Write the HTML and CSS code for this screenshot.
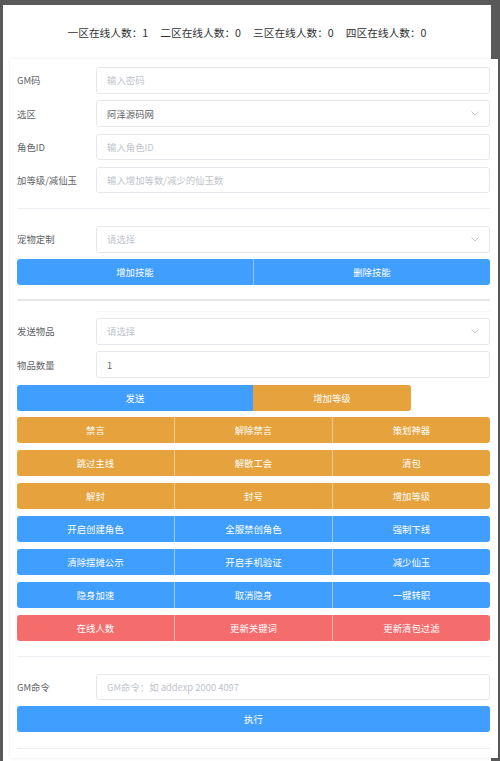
FILE: index.html
```html
<!DOCTYPE html>
<html lang="zh-CN">
<head>
<meta charset="utf-8">
<title>GM</title>
<link rel="stylesheet" href="styles.css">
</head>
<body>
<div class="page">
  <div class="header">
    <span class="stat">一区在线人数：1</span>
    <span class="stat">二区在线人数：0</span>
    <span class="stat">三区在线人数：0</span>
    <span class="stat">四区在线人数：0</span>
  </div>
  <div class="card">
    <div class="row"><label class="lbl">GM码</label><div class="input ph">输入密码</div></div>
    <div class="row"><label class="lbl">选区</label><div class="input select"><span>阿泽源码网</span><svg class="chev" width="8" height="5" viewBox="0 0 8 5"><polyline points="0.5,0.5 4,4 7.5,0.5" fill="none" stroke="#c0c4cc" stroke-width="0.9"/></svg></div></div>
    <div class="row"><label class="lbl">角色ID</label><div class="input ph">输入角色ID</div></div>
    <div class="row"><label class="lbl">加等级/减仙玉</label><div class="input ph">输入增加等数/减少的仙玉数</div></div>

    <div class="divider"></div>

    <div class="row"><label class="lbl">宠物定制</label><div class="input select ph"><span>请选择</span><svg class="chev" width="8" height="5" viewBox="0 0 8 5"><polyline points="0.5,0.5 4,4 7.5,0.5" fill="none" stroke="#c0c4cc" stroke-width="0.9"/></svg></div></div>
    <div class="group">
      <button class="btn blue">增加技能</button>
      <button class="btn blue">删除技能</button>
    </div>

    <div class="divider thick"></div>

    <div class="row first-row"><label class="lbl">发送物品</label><div class="input select ph"><span>请选择</span><svg class="chev" width="8" height="5" viewBox="0 0 8 5"><polyline points="0.5,0.5 4,4 7.5,0.5" fill="none" stroke="#c0c4cc" stroke-width="0.9"/></svg></div></div>
    <div class="row"><label class="lbl">物品数量</label><div class="input">1</div></div>
    <div class="group">
      <button class="btn blue half">发送</button>
      <button class="btn orange third">增加等级</button>
    </div>
    <div class="group">
      <button class="btn orange">禁言</button>
      <button class="btn orange">解除禁言</button>
      <button class="btn orange">策划神器</button>
    </div>
    <div class="group">
      <button class="btn orange">跳过主线</button>
      <button class="btn orange">解散工会</button>
      <button class="btn orange">清包</button>
    </div>
    <div class="group">
      <button class="btn orange">解封</button>
      <button class="btn orange">封号</button>
      <button class="btn orange">增加等级</button>
    </div>
    <div class="group">
      <button class="btn blue">开启创建角色</button>
      <button class="btn blue">全服禁创角色</button>
      <button class="btn blue">强制下线</button>
    </div>
    <div class="group">
      <button class="btn blue">清除摆摊公示</button>
      <button class="btn blue">开启手机验证</button>
      <button class="btn blue">减少仙玉</button>
    </div>
    <div class="group">
      <button class="btn blue">隐身加速</button>
      <button class="btn blue">取消隐身</button>
      <button class="btn blue">一键转职</button>
    </div>
    <div class="group">
      <button class="btn red">在线人数</button>
      <button class="btn red">更新关键词</button>
      <button class="btn red">更新清包过滤</button>
    </div>

    <div class="divider"></div>

    <div class="row gm-row"><label class="lbl">GM命令</label><div class="input ph">GM命令：如 addexp 2000 4097</div></div>
    <div class="group">
      <button class="btn blue">执行</button>
    </div>

    <div class="divider last"></div>
  </div>
</div>
</body>
</html>
```

FILE: styles.css
```css
html, body {
  margin: 0;
  padding: 0;
}
body {
  background: #595959;
  font-family: "Noto Sans CJK SC", "Noto Sans", sans-serif;
}
.page {
  margin: 5px 0 0 3px;
  width: 488px;
  min-height: 756px;
  background: #fff;
}
.header {
  height: 54px;
  display: flex;
  justify-content: center;
  align-items: center;
  gap: 12px;
  font-size: 10.7px;
  color: #303133;
  padding-top: 1px;
  box-sizing: border-box;
}
.card {
  display: flex;
  flex-direction: column;
  margin-left: 7px;
  width: 488px;
  box-sizing: border-box;
  padding: 8px 8px 9px 7px;
  background: #fff;
  box-shadow: 0 0 3px rgba(0, 0, 0, 0.10);
}
.row {
  display: flex;
  align-items: center;
  height: 26.67px;
  margin-bottom: 6.6px;
  flex: none;
}
.lbl {
  width: 79px;
  flex: none;
  font-size: 9.4px;
  color: #606266;
}
.input {
  flex: 1;
  height: 100%;
  box-sizing: border-box;
  border: 1px solid #e6e8ed;
  border-radius: 3px;
  padding: 0 8px 0 10px;
  display: flex;
  align-items: center;
  font-size: 9.4px;
  color: #606266;
}
.ph {
  color: #c0c4cc;
}
.chev {
  margin-left: auto;
  margin-right: 2px;
}
.divider {
  height: 1px;
  flex: none;
  background: #eceef3;
  margin: 8.3px 0 16.8px;
}
.divider.thick {
  height: 2px;
  background: #e6e6e6;
  margin: 7px 0 9.5px;
}
.divider.last {
  margin-bottom: 0;
}
.first-row {
  border-top: 1px solid #f6f6f6;
  padding-top: 6.5px;
  margin-left: 79px;
  height: 34px;
  box-sizing: border-box;
}
.first-row .lbl {
  margin-left: -79px;
}
.group {
  display: flex;
  flex: none;
  height: 26px;
  margin-bottom: 6.9px;
  border-radius: 3px;
  overflow: hidden;
}
.btn {
  flex: 1;
  border: none;
  margin: 0;
  padding: 0;
  font-family: inherit;
  font-size: 9.4px;
  color: #fff;
  border-left: 1px solid rgba(255, 255, 255, 0.45);
}
.btn:first-child {
  border-left: none;
}
.btn.half {
  flex: none;
  width: 236px;
}
.btn.third {
  flex: none;
  width: 158px;
  border-left: none;
  border-radius: 0 3px 3px 0;
}
.blue { background: #409eff; }
.orange { background: #e6a23c; }
.red { background: #f56c6c; }
.gm-row {
  margin-bottom: 6px;
}
```
